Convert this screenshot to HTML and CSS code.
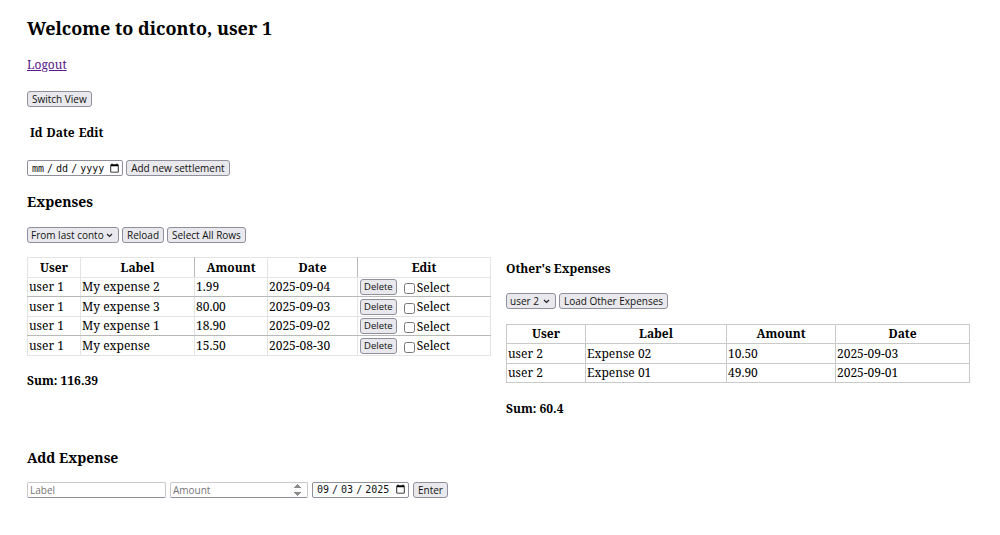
FILE: index.html
```html
<!DOCTYPE html>
<html lang="en">
<head>
<meta charset="utf-8">
<title>diconto</title>
<link rel="stylesheet" href="styles.css">
</head>
<body>
<div class="app">
  <h1 class="title">Welcome to diconto, user 1</h1>
  <p class="logout-row"><a href="#" class="logout">Logout</a></p>
  <div class="switch-row"><button class="btn">Switch View</button></div>

  <table class="settle-table">
    <thead><tr><th>Id</th><th>Date</th><th>Edit</th></tr></thead>
    <tbody></tbody>
  </table>
  <div class="settle-row">
    <input type="date" class="date-input">
    <button class="btn">Add new settlement</button>
  </div>

  <h3 class="section-title">Expenses</h3>
  <div class="controls">
    <span class="sel-wrap sel-conto">
      <select class="sel"><option>From last conto</option></select>
      <svg class="chev" width="7" height="5" viewBox="0 0 7 5"><path d="M1 1 L3.5 3.5 L6 1" fill="none" stroke="#222" stroke-width="1.2"/></svg>
    </span>
    <button class="btn">Reload</button>
    <button class="btn">Select All Rows</button>
  </div>

  <div class="columns">
    <div class="col">
      <table class="exp-table">
        <thead>
          <tr><th class="c-user">User</th><th class="c-label">Label</th><th class="c-amount">Amount</th><th class="c-date">Date</th><th class="c-edit">Edit</th></tr>
        </thead>
        <tbody>
          <tr class="dark"><td>user 1</td><td>My expense 2</td><td>1.99</td><td>2025-09-04</td><td class="edit"><button class="btn btn-del">Delete</button><label class="chk"><input type="checkbox">Select</label></td></tr>
          <tr><td>user 1</td><td>My expense 3</td><td>80.00</td><td>2025-09-03</td><td class="edit"><button class="btn btn-del">Delete</button><label class="chk"><input type="checkbox">Select</label></td></tr>
          <tr class="dark"><td>user 1</td><td>My expense 1</td><td>18.90</td><td>2025-09-02</td><td class="edit"><button class="btn btn-del">Delete</button><label class="chk"><input type="checkbox">Select</label></td></tr>
          <tr><td>user 1</td><td>My expense</td><td>15.50</td><td>2025-08-30</td><td class="edit"><button class="btn btn-del">Delete</button><label class="chk"><input type="checkbox">Select</label></td></tr>
        </tbody>
      </table>
      <p class="sum sum-left">Sum: 116.39</p>
    </div>
    <div class="col">
      <h4 class="sub-title">Other's Expenses</h4>
      <div class="controls controls-right">
        <span class="sel-wrap sel-user">
          <select class="sel"><option>user 2</option></select>
          <svg class="chev" width="7" height="5" viewBox="0 0 7 5"><path d="M1 1 L3.5 3.5 L6 1" fill="none" stroke="#222" stroke-width="1.2"/></svg>
        </span>
        <button class="btn">Load Other Expenses</button>
      </div>
      <table class="other-table">
        <thead>
          <tr><th class="o-user">User</th><th class="o-label">Label</th><th class="o-amount">Amount</th><th>Date</th></tr>
        </thead>
        <tbody>
          <tr><td>user 2</td><td>Expense 02</td><td>10.50</td><td>2025-09-03</td></tr>
          <tr><td>user 2</td><td>Expense 01</td><td>49.90</td><td>2025-09-01</td></tr>
        </tbody>
      </table>
      <p class="sum sum-right">Sum: 60.4</p>
    </div>
  </div>

  <h3 class="section-title add-title">Add Expense</h3>
  <div class="add-row">
    <input type="text" class="txt-input" placeholder="Label">
    <input type="number" class="txt-input num-input" placeholder="Amount">
    <input type="date" class="date-input" value="2025-09-03">
    <button class="btn">Enter</button>
  </div>
</div>
</body>
</html>
```

FILE: styles.css
```css
html, body {
  background: #ffffff;
}
body {
  margin: 0;
  font-family: "Noto Serif", "DejaVu Serif", serif;
  font-size: 12px;
  color: #000;
}
.app {
  padding: 0 30px 8px 27px;
}
.title {
  font-size: 18px;
  font-weight: bold;
  margin: 16px 0 0 0;
}
.logout-row {
  margin: 16px 0 0 0;
}
.logout {
  color: #551a8b;
}
.switch-row {
  margin: 16.5px 0 0 0;
}
.btn {
  font-family: "Open Sans", "Noto Sans", sans-serif;
  font-size: 10px;
  color: #111;
  background: #e9e9ed;
  border: 1px solid #8f8f9d;
  border-radius: 3px;
  padding: 1px 4px;
  line-height: 12px;
  margin: 0;
}
.sel-wrap {
  position: relative;
  display: inline-block;
  height: 16px;
}
.sel {
  appearance: none;
  -webkit-appearance: none;
  font-family: "Open Sans", "Noto Sans", sans-serif;
  font-size: 10px;
  color: #111;
  background: #e9e9ed;
  border: 1px solid #8f8f9d;
  border-radius: 3px;
  padding: 0 0 0 3px;
  height: 16px;
  line-height: 14px;
  margin: 0;
  display: block;
}
.sel-conto .sel { width: 92px; }
.sel-user .sel { width: 50px; }
.chev {
  position: absolute;
  right: 6px;
  top: 6px;
  pointer-events: none;
}
.settle-table {
  margin: 14.5px 0 0 0;
  border-spacing: 2px;
}
.settle-table th {
  padding: 1px;
  font-size: 12px;
}
.settle-row {
  margin: 14.5px 0 0 0;
}
.date-input {
  font-family: "DejaVu Sans Mono", monospace;
  font-size: 10px;
  height: 16px;
  box-sizing: border-box;
  padding: 0 2px 0 3px;
  border: 1px solid #8f8f9d;
  border-radius: 2px;
  margin: 0;
  color: #111;
}
.date-input::-webkit-datetime-edit-text {
  padding: 0 2px;
}
.date-input::-webkit-calendar-picker-indicator {
  margin-left: 2px;
  padding: 0;
  width: 11px;
  height: 11px;
}
.section-title {
  font-size: 14px;
  font-weight: bold;
  margin: 16px 0 0 0;
}
.controls {
  display: flex;
  gap: 3px;
  align-items: center;
  margin-top: 16px;
}
.columns {
  display: flex;
  gap: 15px;
  align-items: flex-start;
  margin-top: 14px;
}
.col {
  flex: 1 1 0;
  min-width: 0;
}
.exp-table {
  width: 100%;
  border-collapse: collapse;
}
.exp-table th, .exp-table td {
  border: 1px solid #e4e4e4;
  padding: 0 1px;
  height: 18.5px;
  text-align: left;
}
.exp-table th {
  text-align: center;
}
.exp-table tr.dark td {
  border-bottom-color: #b9b9b9;
}
.exp-table .c-user { width: 50px; }
.exp-table .c-label { width: 111px; border-right-color: #b9b9b9; }
.exp-table .c-amount { width: 70px; }
.exp-table .c-date { width: 87px; border-right-color: #b9b9b9; }
.edit {
  white-space: nowrap;
}
.btn-del {
  font-size: 9.5px;
  padding: 1px 3px;
  margin-left: 1px;
  vertical-align: middle;
}
.chk input {
  width: 11px;
  height: 11px;
  margin: 0 2px 0 7px;
  vertical-align: middle;
}
.chk {
  vertical-align: middle;
}
.sum {
  font-weight: bold;
  margin: 0;
}
.sum-left {
  margin-top: 16px;
}
.sum-right {
  margin-top: 16.5px;
}
.sub-title {
  font-size: 12px;
  font-weight: bold;
  margin: 3px 0 0 0;
}
.controls-right {
  margin-top: 15.5px;
}
.other-table {
  width: 100%;
  border-collapse: collapse;
  margin-top: 15px;
  border: 1px solid #a0a0a0;
}
.other-table th, .other-table td {
  border: 1px solid #c9c9c9;
  padding: 0 1px;
  height: 18.5px;
  text-align: left;
}
.other-table th {
  text-align: center;
}
.other-table .o-user { width: 76px; }
.other-table .o-label { width: 138px; }
.other-table .o-amount { width: 106px; }
.add-title {
  margin-top: 31px;
}
.add-row {
  display: flex;
  gap: 4px;
  align-items: center;
  margin-top: 15px;
}
.txt-input {
  font-family: "Open Sans", "Noto Sans", sans-serif;
  font-size: 10px;
  width: 139px;
  height: 16px;
  box-sizing: border-box;
  padding: 0 2px;
  border: 1px solid #c8c8c8;
  border-bottom-color: #8f8f9d;
  border-radius: 2px;
  margin: 0;
}
.num-input {
  width: 138px;
}
.num-input::-webkit-inner-spin-button {
  opacity: 1;
}
.date-input {
  width: 97px;
}
.settle-row .date-input {
  width: 96px;
}
```
